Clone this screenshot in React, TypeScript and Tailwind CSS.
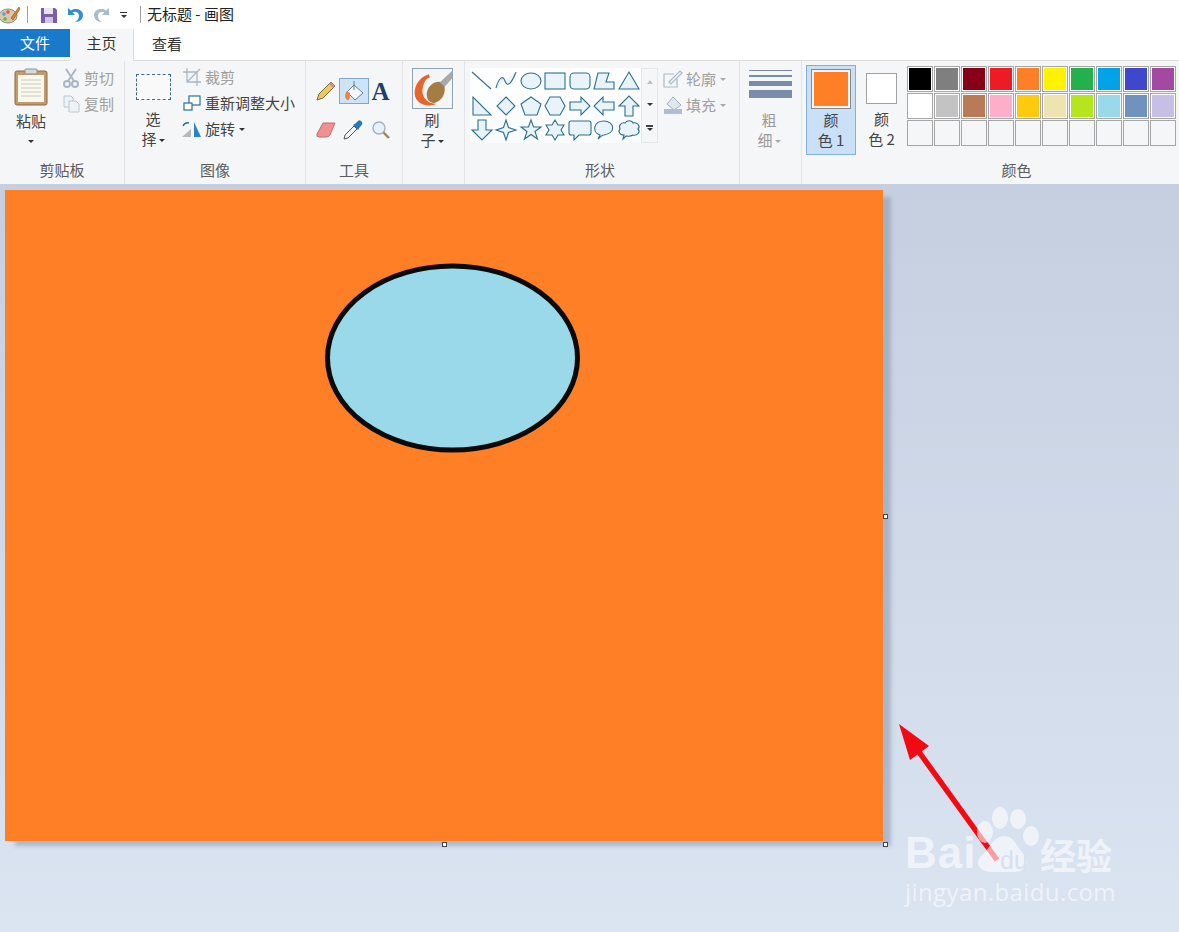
import type { ReactNode } from "react";

const cjk = { fontFamily: '"Noto Sans CJK SC", "Noto Sans", sans-serif' };

const row1 = ["#000000", "#7f7f7f", "#880015", "#ed1c24", "#ff7f27", "#fff200", "#22b14c", "#00a2e8", "#3f48cc", "#a349a4"];
const row2 = ["#ffffff", "#c3c3c3", "#b97a57", "#ffaec9", "#ffc90e", "#efe4b0", "#b5e61d", "#99d9ea", "#7092be", "#c8bfe7"];

const shapes: ReactNode[] = [
  <path d="M2 3 L21 20" />,
  <path d="M2 19 C5 8 9 6 11 12 C13 18 17 16 22 3" />,
  <ellipse cx="12" cy="12" rx="10" ry="8" />,
  <rect x="2" y="4" width="20" height="16" />,
  <rect x="2" y="4" width="20" height="16" rx="4" />,
  <path d="M2 20 L6 4 H17 L14 13 H22 V20 Z" />,
  <path d="M12 3 L22 20 H2 Z" />,
  <path d="M3 3 V21 H21 Z" />,
  <path d="M12 3 L21 12 L12 21 L3 12 Z" />,
  <path d="M12 3 L22 10 L18 21 H6 L2 10 Z" />,
  <path d="M7 3 H17 L22 12 L17 21 H7 L2 12 Z" />,
  <path d="M2 8 H13 V3 L22 12 L13 21 V16 H2 Z" />,
  <path d="M22 8 H11 V3 L2 12 L11 21 V16 H22 Z" />,
  <path d="M8 22 V12 H2 L12 2 L22 12 H16 V22 Z" />,
  <path d="M8 2 V12 H2 L12 22 L22 12 H16 V2 Z" />,
  <path d="M12 2 L14.5 9.5 L22 12 L14.5 14.5 L12 22 L9.5 14.5 L2 12 L9.5 9.5 Z" />,
  <path d="M12 2 L14.5 9 H22 L16 13.5 L18.5 21 L12 16.5 L5.5 21 L8 13.5 L2 9 H9.5 Z" />,
  <path d="M12 2 L15 7 H21 L18 12 L21 17 H15 L12 22 L9 17 H3 L6 12 L3 7 H9 Z" />,
  <path d="M3 3 H21 Q23 3 23 5 V15 Q23 17 21 17 H11 L6 22 V17 H3 Q1 17 1 15 V5 Q1 3 3 3 Z" />,
  <path d="M6 21 L8 17 C-1 14 2 3 12 3 C22 3 25 15 12 17 C10 17 8 19 6 21 Z" />,
  <path d="M6 21 L7 17 C2 17 1 13 3 11 C1 7 5 4 8 5 C10 2 15 2 16 5 C20 4 24 8 21 11 C24 14 20 18 16 17 C13 19 10 18 9 18 Z" />,
];

function Label({ children }: { children: ReactNode }) {
  return <div className="h-[24px] text-center text-[15px] leading-[20px] text-[#5c5c5c]">{children}</div>;
}

function Caret({ light }: { light?: boolean }) {
  return (
    <span
      className={`inline-block h-0 w-0 border-x-[3px] border-t-[3px] border-x-transparent align-middle ${
        light ? "border-t-[#a8a8a8]" : "border-t-[#333333]"
      }`}
    />
  );
}

function TwoLine({ top, bottom, light }: { top: string; bottom: ReactNode; light?: boolean }) {
  return (
    <div className={`text-center text-[15px] leading-[20px] ${light ? "text-[#9a9a9a]" : "text-[#444444]"}`}>
      <div>{top}</div>
      <div>{bottom}</div>
    </div>
  );
}

function SmallRow({ icon, children, light }: { icon: ReactNode; children: ReactNode; light?: boolean }) {
  return (
    <div className={`flex h-[26px] items-center gap-[3px] text-[15px] ${light ? "text-[#a0a0a0]" : "text-[#444444]"}`}>
      <span className="flex h-[20px] w-[20px] items-center justify-center">{icon}</span>
      <span className="flex items-center gap-1 whitespace-nowrap">{children}</span>
    </div>
  );
}

function Swatch({ color }: { color?: string }) {
  return (
    <div className={`h-[26px] w-[26px] shrink-0 border border-[#a6a6a6] p-[1px] ${color ? "bg-white" : "bg-[#f5f6f7]"}`}>
      {color && <div className="h-full w-full" style={{ backgroundColor: color }} />}
    </div>
  );
}

function PaintLogo() {
  return (
    <svg width="21" height="20" viewBox="0 0 21 20">
      <ellipse cx="8" cy="11" rx="9" ry="7" fill="#d8c9a8" stroke="#8a8a7a" />
      <circle cx="4" cy="9" r="1.8" fill="#4aa3df" />
      <circle cx="8" cy="7" r="1.8" fill="#e2574c" />
      <circle cx="5" cy="14" r="1.8" fill="#65b04a" />
      <path d="M19 2 L11 13 L13 15 L20 4 Z" fill="#d9842b" stroke="#7a5a30" strokeWidth="0.6" />
    </svg>
  );
}

function Toolbar() {
  return (
    <div className="flex h-[29px] items-center bg-white">
      <PaintLogo />
      <div className="ml-[6px] h-[17px] w-px bg-[#a0a0a0]" />
      <svg className="ml-[12px]" width="18" height="18" viewBox="0 0 18 18">
        <path d="M1 2 H15 L17 4 V17 H1 Z" fill="#7b5ea7" />
        <rect x="4" y="2" width="9" height="6" fill="#e8e4f0" />
        <rect x="5" y="11" width="8" height="6" fill="#cfc6e0" />
      </svg>
      <svg className="ml-[8px]" width="18" height="18" viewBox="0 0 18 18">
        <path d="M2 2 V9 H9 L6.5 6.5 C9 5 13 6 13 10 C13 13 11 15 9 16 C14 16 17 13 17 9 C17 4 10 1 5 4.5 Z" fill="#2f8fd0" />
      </svg>
      <svg className="ml-[9px]" width="18" height="18" viewBox="0 0 18 18">
        <path d="M16 2 V9 H9 L11.5 6.5 C9 5 5 6 5 10 C5 13 7 15 9 16 C4 16 1 13 1 9 C1 4 8 1 13 4.5 Z" fill="#a9bccd" />
      </svg>
      <div className="ml-[9px] flex w-[7px] flex-col items-center gap-[2px]">
        <div className="h-px w-[7px] bg-[#333333]" />
        <Caret />
      </div>
      <div className="ml-[13px] h-[17px] w-px bg-[#a0a0a0]" />
      <div className="ml-[6px] text-[15px] text-[#222222]">无标题 - 画图</div>
    </div>
  );
}

function Tabs() {
  return (
    <div className="flex h-[32px] border-b border-[#dadbdc] bg-white text-[15px]">
      <div className="flex h-[28px] w-[70px] items-center justify-center bg-[#1979ca] text-white">文件</div>
      <div className="z-10 flex h-[32px] w-[64px] items-center justify-center border-r border-[#dadbdc] bg-[#f5f6f7] pb-[3px] text-[#333333]">
        主页
      </div>
      <div className="flex h-[30px] w-[66px] items-center justify-center text-[#333333]">查看</div>
    </div>
  );
}

function ClipboardGroup() {
  return (
    <section className="flex w-[125px] flex-col border-r border-[#e2e4e7]">
      <div className="flex flex-1 pt-[7px]">
        <div className="ml-[12px] flex w-[38px] flex-col items-center">
          <svg width="36" height="38" viewBox="0 0 36 38">
            <rect x="2" y="3" width="32" height="34" rx="2" fill="#c49a6c" stroke="#8a6a46" />
            <rect x="5" y="7" width="26" height="27" fill="#fbf8ee" />
            <path d="M8 12 H28 M8 16 H28 M8 20 H28 M8 24 H28 M8 28 H28" stroke="#c9c9c0" />
            <rect x="12" y="1" width="12" height="5" rx="1" fill="#d8d8d8" stroke="#8f8f8f" />
          </svg>
          <div className="mt-[5px] text-center text-[15px] leading-[20px] text-[#444444]">
            <div>粘贴</div>
            <div className="-mt-[1px]"><Caret /></div>
          </div>
        </div>
        <div className="-mt-[3px] ml-[11px]">
          <SmallRow
            light
            icon={
              <svg width="16" height="20" viewBox="0 0 16 20" fill="none" stroke="#aab6c6" strokeWidth="2">
                <path d="M3 1 L11 13 M13 1 L5 13" />
                <circle cx="4" cy="16" r="3" />
                <circle cx="12" cy="16" r="3" />
              </svg>
            }
          >
            剪切
          </SmallRow>
          <SmallRow
            light
            icon={
              <svg width="17" height="18" viewBox="0 0 17 18" fill="#eef1f5" stroke="#bcc6d2">
                <path d="M1 1 H8 L10 3 V12 H1 Z" />
                <path d="M6 6 H13 L16 9 V17 H6 Z" />
              </svg>
            }
          >
            复制
          </SmallRow>
        </div>
      </div>
      <Label>剪贴板</Label>
    </section>
  );
}

function ImageGroup() {
  return (
    <section className="flex w-[181px] flex-col border-r border-[#e2e4e7]">
      <div className="flex flex-1 pt-[5px]">
        <div className="ml-[10px] flex w-[36px] flex-col items-center">
          <div className="mt-[8px] h-[26px] w-[35px] border border-dashed border-[#3f6a90] bg-white/40" />
          <div className="mt-[9px]">
            <TwoLine top="选" bottom={<span>择<span className="ml-[2px]"><Caret /></span></span>} />
          </div>
        </div>
        <div className="-mt-[2px] ml-[11px]">
          <SmallRow
            light
            icon={
              <svg width="18" height="18" viewBox="0 0 18 18" fill="none" stroke="#a9b7c8" strokeWidth="1.3">
                <path d="M4 0 V14 H18 M0 4 H14 V18 M4 14 L17 1" />
              </svg>
            }
          >
            裁剪
          </SmallRow>
          <SmallRow
            icon={
              <svg width="18" height="16" viewBox="0 0 18 16" fill="#ffffff" stroke="#2a6f9e" strokeWidth="1.2">
                <rect x="6" y="1" width="11" height="9" />
                <rect x="1" y="8" width="8" height="7" />
              </svg>
            }
          >
            重新调整大小
          </SmallRow>
          <SmallRow
            icon={
              <svg width="20" height="18" viewBox="0 0 20 18">
                <path d="M0 17 L9 9 V17 Z" fill="#b8b8b8" />
                <path d="M12 2 L19 17 H12 Z" fill="#2a85c8" />
                <path d="M1 6 Q3 2 7 3" fill="none" stroke="#2a6f9e" strokeWidth="1.4" />
              </svg>
            }
          >
            旋转 <Caret />
          </SmallRow>
        </div>
      </div>
      <Label>图像</Label>
    </section>
  );
}

function ToolsGroup() {
  return (
    <section className="flex w-[97px] flex-col border-r border-[#e2e4e7]">
      <div className="flex-1 pt-[17px]">
        <div className="ml-[6px] grid grid-cols-[27px_28px_27px] grid-rows-[26px_26px] gap-y-[13px]">
          <div className="flex items-center justify-center">
            <svg width="22" height="22" viewBox="0 0 22 22">
              <path d="M2 20 L4 14 L16 2 L20 6 L8 18 Z" fill="#f0c860" stroke="#7a6a40" />
              <path d="M16 2 L20 6 L18 8 L14 4 Z" fill="#d88a80" />
            </svg>
          </div>
          <div className="flex h-[26px] w-[30px] items-center justify-center border border-[#7fa8d0] bg-[#cfe3f7]">
            <svg width="22" height="22" viewBox="0 0 22 22">
              <path d="M11 5 L20 13 L12 20 L4 12 Z" fill="#f4f6f8" stroke="#5f7f9f" />
              <path d="M11 1 V10" stroke="#5f7f9f" />
              <path d="M4 11 C1 14 2 20 5 20 C7 20 7 15 7 13 Z" fill="#f08040" />
            </svg>
          </div>
          <div className="flex items-center justify-center text-[25px] font-bold leading-none text-[#1f3f68] [font-family:'Liberation_Serif',serif]">
            A
          </div>
          <div className="flex items-center justify-center">
            <svg width="22" height="20" viewBox="0 0 22 20">
              <path d="M8 3 H20 L15 15 Q14 17 11 17 H4 Q1 17 2 14 Z" fill="#f09090" stroke="#c07070" />
            </svg>
          </div>
          <div className="flex items-center justify-center">
            <svg width="22" height="22" viewBox="0 0 22 22">
              <path d="M2 20 L3 16 L12 7 L15 10 L6 19 Z" fill="#eef3f7" stroke="#555555" />
              <path d="M11 6 L16 11 L18 8 Q22 4 19 2 Q17 0 14 4 Z" fill="#2a78b8" />
            </svg>
          </div>
          <div className="flex items-center justify-center">
            <svg width="20" height="20" viewBox="0 0 20 20">
              <circle cx="8" cy="8" r="6" fill="#e6f1fa" stroke="#9fb2c4" strokeWidth="1.4" />
              <path d="M12.5 12.5 L18 18" stroke="#a08060" strokeWidth="2.4" />
            </svg>
          </div>
        </div>
      </div>
      <Label>工具</Label>
    </section>
  );
}

function BrushGroup() {
  return (
    <section className="flex w-[62px] flex-col border-r border-[#e2e4e7] pt-[7px]">
      <div className="ml-[9px] h-[41px] w-[41px] border border-[#8fa3b5] bg-[#f3f5f7]">
        <svg width="39" height="39" viewBox="0 0 37 37">
          <path d="M37 2 L25 13 L29 18 L37 9 Z" fill="#a9a9a9" />
          <path d="M25 12 C18 12 13 18 13 24 C13 30 17 33 21 32 C27 30 31 24 30 17 Z" fill="#a67c45" />
          <path d="M15 5 C5 8 0 18 2 26 C5 35 17 36 22 33 C14 33 8 27 9 19 C10 13 12 9 16 8 Z" fill="#e8642a" />
        </svg>
      </div>
      <div className="mt-[1px] pr-[3px]">
        <TwoLine top="刷" bottom={<span>子<span className="ml-[2px]"><Caret /></span></span>} />
      </div>
    </section>
  );
}

function ShapesGroup() {
  return (
    <section className="flex w-[275px] flex-col border-r border-[#e2e4e7]">
      <div className="flex flex-1 pl-[5px] pt-[7px]">
        <div className="grid h-[75px] w-[171px] grid-cols-7 grid-rows-3 bg-gradient-to-b from-[#ffffff] to-[#f9fbfd] pt-[1px]">
          {shapes.map((shape, i) => (
            <svg
              key={i}
              width="24"
              height="24"
              viewBox="0 0 24 24"
              fill="#e9f4fa"
              stroke="#2d6f8e"
              strokeWidth="1.1"
            >
              {shape}
            </svg>
          ))}
        </div>
        <div className="flex h-[75px] w-[17px] flex-col items-center justify-around border border-[#e4e6e8] py-[2px]">
          <span className="h-0 w-0 border-x-[3px] border-b-[4px] border-x-transparent border-b-[#c0c0c0]" />
          <Caret />
          <div className="flex flex-col items-center gap-[1px]">
            <div className="h-[2px] w-[7px] bg-[#444444]" />
            <Caret />
          </div>
        </div>
        <div className="-mt-[2px] ml-[5px]">
          <SmallRow
            light
            icon={
              <svg width="20" height="18" viewBox="0 0 20 18" fill="none" stroke="#a9b7c8" strokeWidth="1.2">
                <path d="M1 4 H11 M1 4 V17 H14 V9" />
                <path d="M6 12 L17 1 L19 3 L8 14 Z" />
              </svg>
            }
          >
            轮廓 <Caret light />
          </SmallRow>
          <SmallRow
            light
            icon={
              <svg width="20" height="18" viewBox="0 0 20 18">
                <path d="M10 1 L18 9 L11 14 L4 8 Z" fill="#dfe6ee" stroke="#9fb0c2" />
                <rect x="1" y="13" width="18" height="5" fill="#aebed0" />
              </svg>
            }
          >
            填充 <Caret light />
          </SmallRow>
        </div>
      </div>
      <div className="pr-[4px]"><Label>形状</Label></div>
    </section>
  );
}

function SizeGroup() {
  return (
    <section className="flex w-[62px] flex-col border-r border-[#e2e4e7] pt-[9px]">
      <div className="mx-[9px] flex h-[36px] flex-col gap-[4px]">
        <div className="h-px bg-[#7b8ca8]" />
        <div className="h-[2px] bg-[#7b8ca8]" />
        <div className="h-[5px] bg-[#7b8ca8]" />
        <div className="h-[8px] bg-[#7b8ca8]" />
      </div>
      <div className="mt-[4px] pr-[3px]">
        <TwoLine light top="粗" bottom={<span>细<span className="ml-[2px]"><Caret light /></span></span>} />
      </div>
    </section>
  );
}

function ColorsGroup() {
  return (
    <section className="flex min-w-0 flex-1 flex-col overflow-hidden">
      <div className="flex flex-1 pl-[4px]">
        <div className="mt-[4px] flex h-[90px] w-[50px] shrink-0 flex-col items-center border border-[#7fb0de] bg-[#c9e0f7] pt-[3px]">
          <div className="h-[40px] w-[40px] border border-[#8a8a8a] bg-white/70 p-[2px]">
            <div className="h-full w-full bg-[#ff7f27]" />
          </div>
          <div className="mt-[1px]"><TwoLine top="颜" bottom="色 1" /></div>
        </div>
        <div className="mt-[4px] flex w-[51px] shrink-0 flex-col items-center pt-[8px]">
          <div className="h-[31px] w-[31px] border border-[#a0a0a0] bg-white" />
          <div className="mt-[5px]"><TwoLine top="颜" bottom="色 2" /></div>
        </div>
        <div className="mt-[5px] flex w-[280px] shrink-0 flex-col gap-px">
          <div className="flex gap-px">{row1.map((c) => <Swatch key={c} color={c} />)}</div>
          <div className="flex gap-px">{row2.map((c) => <Swatch key={c} color={c} />)}</div>
          <div className="flex gap-px">{row2.map((c) => <Swatch key={c} />)}</div>
        </div>
      </div>
      <div className="pl-[52px]"><Label>颜色</Label></div>
    </section>
  );
}

function Ribbon() {
  return (
    <div className="flex h-[123px] bg-[#f5f6f7]">
      <ClipboardGroup />
      <ImageGroup />
      <ToolsGroup />
      <BrushGroup />
      <ShapesGroup />
      <SizeGroup />
      <ColorsGroup />
    </div>
  );
}

function Handle({ className }: { className: string }) {
  return <div className={`absolute h-[5px] w-[5px] border border-[#444444] bg-white ${className}`} />;
}

function Watermark() {
  return (
    <div className="absolute left-[905px] top-[806px] h-[102px] w-[212px] text-white/60">
      <svg className="absolute left-[65px] top-0" width="72" height="68" viewBox="0 0 72 68" fill="currentColor">
        <ellipse cx="15" cy="26" rx="8" ry="11" />
        <ellipse cx="30" cy="12" rx="8" ry="11" />
        <ellipse cx="48" cy="13" rx="8" ry="10" />
        <ellipse cx="61" cy="30" rx="8" ry="10" />
        <path d="M34 30 C24 30 20 42 11 50 C4 58 10 66 22 66 H44 C58 66 60 54 52 46 C46 40 44 30 34 30 Z" />
      </svg>
      <div className="absolute left-0 top-[22px] text-[44px] font-bold leading-[50px] tracking-[1px] [font-family:'Liberation_Sans',sans-serif]">
        Bai
      </div>
      <div className="absolute left-[95px] top-[40px] text-[25px] leading-[28px] text-[#d6e0ee] [font-family:'Liberation_Sans',sans-serif]">
        du
      </div>
      <div className="absolute left-[135px] top-[26px] text-[36px] font-bold leading-[44px]">经验</div>
      <div className="absolute left-0 top-[71px] text-[24px] leading-[30px] tracking-[0.4px] [font-family:'Open_Sans',sans-serif]">
        jingyan.baidu.com
      </div>
    </div>
  );
}

function Arrow() {
  return (
    <svg className="absolute left-[895px] top-[720px]" width="110" height="145" viewBox="0 0 110 145">
      <path d="M4 4 L34 26 L15 40 Z" fill="#f10a10" />
      <path d="M24 32 L102 140" stroke="#f10a10" strokeWidth="5.5" fill="none" />
    </svg>
  );
}

export default function App() {
  return (
    <div className="relative h-[932px] w-[1179px] overflow-hidden bg-[#d5dfec]" style={cjk}>
      <Toolbar />
      <Tabs />
      <Ribbon />
      <div className="relative h-[748px] bg-gradient-to-b from-[#c5cfe0] to-[#dbe4f1] pl-[5px] pt-[6px]">
        <div className="relative h-[651px] w-[878px] bg-[#ff7f27] shadow-[9px_6px_4px_-1px_rgba(120,135,160,0.45)]">
          <svg className="absolute left-[320px] top-[73px]" width="255" height="190" viewBox="0 0 255 190">
            <ellipse cx="127.5" cy="95" rx="125" ry="92" fill="#99d9ea" stroke="#0a0a0a" strokeWidth="5" />
          </svg>
          <Handle className="left-[878px] top-[324px]" />
          <Handle className="left-[437px] top-[652px]" />
          <Handle className="left-[878px] top-[652px]" />
        </div>
      </div>
      <Arrow />
      <Watermark />
    </div>
  );
}
